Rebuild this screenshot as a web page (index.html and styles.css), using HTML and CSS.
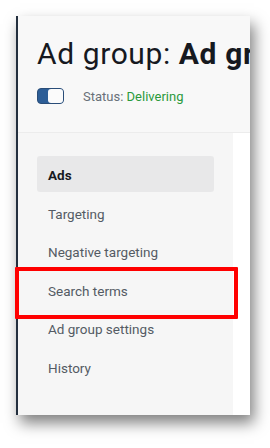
FILE: index.html
```html
<!DOCTYPE html>
<html lang="en">
<head>
    <meta charset="UTF-8">
    <meta name="viewport" content="width=device-width, initial-scale=1.0">
    <title>Ad group</title>
    <link rel="stylesheet" href="styles.css">
</head>
<body>
<div class="page">
    <div class="card">
        <div class="card-header">
            <h1 class="title">Ad group: <b>Ad group 1</b></h1>
            <div class="status-row">
                <span class="toggle"><span class="knob"></span></span>
                <span class="status-label">Status: <span class="status-value">Delivering</span></span>
            </div>
        </div>
        <div class="card-body">
            <nav class="side-nav">
                <a class="nav-item active">Ads</a>
                <a class="nav-item">Targeting</a>
                <a class="nav-item">Negative targeting</a>
                <a class="nav-item">Search terms</a>
                <a class="nav-item">Ad group settings</a>
                <a class="nav-item">History</a>
            </nav>
            <div class="content"></div>
        </div>
    </div>
    <div class="highlight-box"></div>
</div>
</body>
</html>
```

FILE: styles.css
```css
body {
    margin: 0;
    background-color: #ffffff;
    font-family: Roboto, "Liberation Sans", sans-serif;
}

.page {
    position: relative;
    padding: 16px 0 0 16px;
    height: 432px;
}

.card {
    width: 232px;
    height: 399px;
    border-left: 2px solid #232f3e;
    background-color: #f8f8f8;
    box-shadow: 4px 8px 14px rgba(0, 0, 0, 0.5);
    overflow: hidden;
    display: flex;
    flex-direction: column;
}

.card-header {
    height: 117px;
    padding-left: 19px;
    border-bottom: 1px solid #ececec;
    box-sizing: border-box;
}

.title {
    margin: 21px 0 0 0;
    font-size: 30px;
    letter-spacing: 0.6px;
    font-weight: 400;
    color: #16191f;
    white-space: nowrap;
    line-height: 34px;
}

.title b {
    font-weight: 700;
}

.status-row {
    display: flex;
    align-items: center;
    margin-top: 17px;
}

.toggle {
    display: flex;
    justify-content: flex-end;
    width: 27px;
    height: 16px;
    border-radius: 4px;
    background-color: #2d5e97;
    box-sizing: border-box;
    border: 1px solid #2a4d78;
}

.knob {
    width: 15px;
    height: 14px;
    border-radius: 3px;
    background-color: #fbfbfb;
}

.status-label {
    margin-left: 19px;
    font-size: 13px;
    color: #687078;
}

.status-value {
    color: #2b9a3c;
}

.card-body {
    flex: 1;
    display: flex;
}

.side-nav {
    width: 215px;
    background-color: #f6f6f6;
    padding: 23px 0 0 19px;
    box-sizing: border-box;
    display: flex;
    flex-direction: column;
}

.nav-item {
    display: block;
    width: 177px;
    height: 36px;
    line-height: 38px;
    margin-bottom: 2.5px;
    padding-left: 11px;
    box-sizing: border-box;
    border-radius: 3px;
    font-size: 13.5px;
    color: #545b64;
}

.nav-item.active {
    background-color: #e8e8e9;
    color: #16191f;
    font-weight: 700;
}

.content {
    flex: 1;
    background-color: #ffffff;
}

.highlight-box {
    position: absolute;
    left: 15px;
    top: 267px;
    width: 223px;
    height: 52px;
    border: 4px solid #ff0000;
    border-radius: 1px;
    box-sizing: border-box;
}
```
